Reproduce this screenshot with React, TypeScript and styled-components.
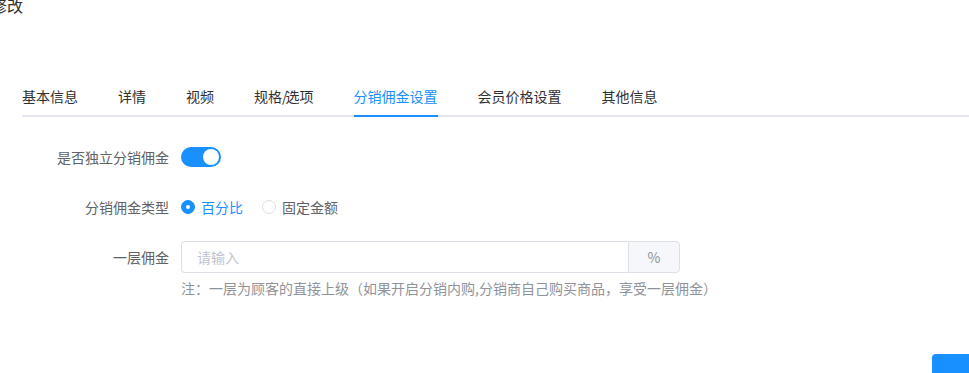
import React, { useState } from "react";
import styled, { createGlobalStyle } from "styled-components";

const BLUE = "#1890ff";

const Global = createGlobalStyle`
  html, body { margin: 0; padding: 0; background: #fff; overflow: hidden; }
  body { font-family: "Noto Sans CJK SC", "Noto Sans", sans-serif; font-size: 14px; }
  * { box-sizing: border-box; }
`;

const Page = styled.div`
  width: 969px;
  height: 373px;
  overflow: hidden;
  display: flex;
  flex-direction: column;
`;

const Title = styled.div`
  margin: -7px 0 0 -9px;
  font-size: 16px;
  line-height: 24px;
  color: #303133;
  white-space: nowrap;
`;

const Body = styled.div`
  padding-left: 22px;
  margin-top: 60px;
`;

const TabBar = styled.div`
  display: flex;
  border-bottom: 2px solid #e4e7ed;
  margin-right: -20px;
`;

const Tab = styled.div<{ $active?: boolean }>`
  position: relative;
  height: 40px;
  line-height: 39px;
  padding: 0 20px;
  font-size: 14px;
  color: ${(p) => (p.$active ? BLUE : "#303133")};
  margin-bottom: -2px;
  cursor: pointer;
  &:first-child { padding-left: 0; }
  &::after {
    content: "";
    position: absolute;
    left: 20px;
    right: 20px;
    bottom: 0;
    height: 2px;
    background: ${(p) => (p.$active ? BLUE : "transparent")};
  }
`;

const Slash = styled.span`
  letter-spacing: -2px;
`;

const Form = styled.div`
  margin-top: 24px;
  display: grid;
  grid-template-columns: 147px 1fr;
  column-gap: 12px;
  row-gap: 18px;
  align-items: start;
`;

const Label = styled.div`
  text-align: right;
  line-height: 32px;
  height: 32px;
  color: #606266;
  font-size: 14px;
`;

const Field = styled.div`
  min-height: 32px;
  display: flex;
  flex-direction: column;
  justify-content: center;
`;

const Row = styled.div`
  display: flex;
  align-items: center;
  height: 32px;
`;

const SwitchTrack = styled.button<{ $on: boolean }>`
  position: relative;
  width: 40px;
  height: 20px;
  border-radius: 10px;
  border: none;
  padding: 0;
  background: ${(p) => (p.$on ? BLUE : "#dcdfe6")};
  cursor: pointer;
  &::after {
    content: "";
    position: absolute;
    top: 2px;
    left: ${(p) => (p.$on ? "22px" : "2px")};
    width: 16px;
    height: 16px;
    border-radius: 50%;
    background: #fff;
  }
`;

const RadioItem = styled.label<{ $checked: boolean }>`
  display: inline-flex;
  align-items: center;
  gap: 6px;
  margin-right: 19px;
  color: ${(p) => (p.$checked ? BLUE : "#606266")};
  font-size: 14px;
  cursor: pointer;
`;

const RadioDot = styled.span<{ $checked: boolean }>`
  position: relative;
  width: 14px;
  height: 14px;
  border-radius: 50%;
  border: 1px solid ${(p) => (p.$checked ? BLUE : "#dcdfe6")};
  background: ${(p) => (p.$checked ? BLUE : "#fff")};
  &::after {
    content: "";
    position: absolute;
    left: 50%;
    top: 50%;
    width: 4px;
    height: 4px;
    margin: -2px 0 0 -2px;
    border-radius: 50%;
    background: #fff;
    display: ${(p) => (p.$checked ? "block" : "none")};
  }
`;

const InputGroup = styled.div`
  display: flex;
  width: 499px;
  height: 32px;
`;

const Input = styled.input`
  flex: 1;
  height: 32px;
  border: 1px solid #dcdfe6;
  border-right: none;
  border-radius: 4px 0 0 4px;
  padding: 0 15px;
  font-family: inherit;
  font-size: 14px;
  color: #606266;
  outline: none;
  &::placeholder { color: #c0c4cc; }
`;

const Append = styled.div`
  width: 52px;
  height: 32px;
  border: 1px solid #dcdfe6;
  border-radius: 0 4px 4px 0;
  background: #f5f7fa;
  color: #909399;
  display: flex;
  align-items: center;
  justify-content: center;
  font-size: 14px;
`;

const Note = styled.div`
  margin-top: 5px;
  line-height: 20px;
  color: #909399;
  font-size: 14px;
  white-space: nowrap;
`;

const Footer = styled.div`
  margin-top: auto;
  display: flex;
  justify-content: flex-end;
  margin-right: -30px;
`;

const PrimaryButton = styled.button`
  width: 67px;
  height: 64px;
  margin-bottom: -45px;
  border: none;
  border-radius: 4px;
  background: ${BLUE};
  color: #fff;
  font-family: inherit;
  font-size: 14px;
`;

const tabs = ["基本信息", "详情", "视频", "规格/选项", "分销佣金设置", "会员价格设置", "其他信息"];

function renderTab(t: string) {
  if (!t.includes("/")) return t;
  const [a, b] = t.split("/");
  return (
    <>
      {a}
      <Slash>/</Slash>
      {b}
    </>
  );
}

export default function App() {
  const [active, setActive] = useState(4);
  const [on, setOn] = useState(true);
  const [type, setType] = useState(0);
  return (
    <>
      <Global />
      <Page>
        <Title>修改</Title>
        <Body>
          <TabBar>
            {tabs.map((t, i) => (
              <Tab key={t} $active={i === active} onClick={() => setActive(i)}>
                {renderTab(t)}
              </Tab>
            ))}
          </TabBar>
          <Form>
            <Label>是否独立分销佣金</Label>
            <Field>
              <Row>
                <SwitchTrack $on={on} onClick={() => setOn(!on)} />
              </Row>
            </Field>
            <Label>分销佣金类型</Label>
            <Field>
              <Row>
                {["百分比", "固定金额"].map((t, i) => (
                  <RadioItem key={t} $checked={type === i} onClick={() => setType(i)}>
                    <RadioDot $checked={type === i} />
                    {t}
                  </RadioItem>
                ))}
              </Row>
            </Field>
            <Label>一层佣金</Label>
            <Field>
              <InputGroup>
                <Input placeholder="请输入" />
                <Append>%</Append>
              </InputGroup>
              <Note>注：一层为顾客的直接上级（如果开启分销内购,分销商自己购买商品，享受一层佣金）</Note>
            </Field>
          </Form>
        </Body>
        <Footer>
          <PrimaryButton>保存</PrimaryButton>
        </Footer>
      </Page>
    </>
  );
}
